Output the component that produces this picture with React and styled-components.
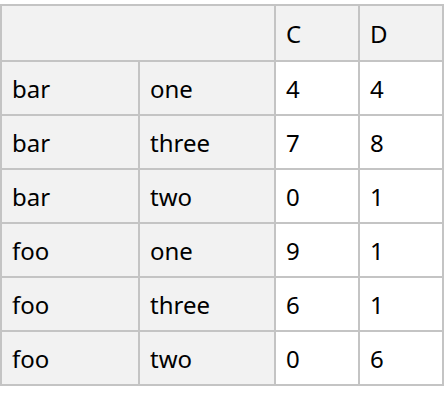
import React from "react";
import styled, { createGlobalStyle } from "styled-components";

const rows = [
  ["bar", "one", 4, 4],
  ["bar", "three", 7, 8],
  ["bar", "two", 0, 1],
  ["foo", "one", 9, 1],
  ["foo", "three", 6, 1],
  ["foo", "two", 0, 6],
];

function App() {
  return (
    <>
      <GlobalStyle />
      <Page>
        <Grid>
          <Corner />
          <Cell $head>C</Cell>
          <Cell $head>D</Cell>
          {rows.map((r, i) => (
            <React.Fragment key={i}>
              <Cell $head>{r[0]}</Cell>
              <Cell $head>{r[1]}</Cell>
              <Cell>{r[2]}</Cell>
              <Cell>{r[3]}</Cell>
            </React.Fragment>
          ))}
        </Grid>
      </Page>
    </>
  );
}

const GlobalStyle = createGlobalStyle`
  body {
    margin: 0;
    background: #fff;
    font-family: "Noto Sans", "Open Sans", sans-serif;
  }
`;

const Page = styled.div`
  padding-top: 4px;
`;

const Grid = styled.div`
  display: grid;
  grid-template-columns: 136px 134px 82px 82px;
  grid-template-rows: 54px repeat(6, 52px);
  gap: 2px;
  padding: 2px;
  width: 444px;
  box-sizing: border-box;
  background: #c4c4c4;
`;

const Cell = styled.div`
  display: flex;
  align-items: center;
  padding-left: 10px;
  font-size: 24px;
  color: #000;
  background: ${(p) => (p.$head ? "#f2f2f2" : "#fff")};
`;

const Corner = styled(Cell).attrs({ $head: true })`
  grid-column: span 2;
`;

export default App;
